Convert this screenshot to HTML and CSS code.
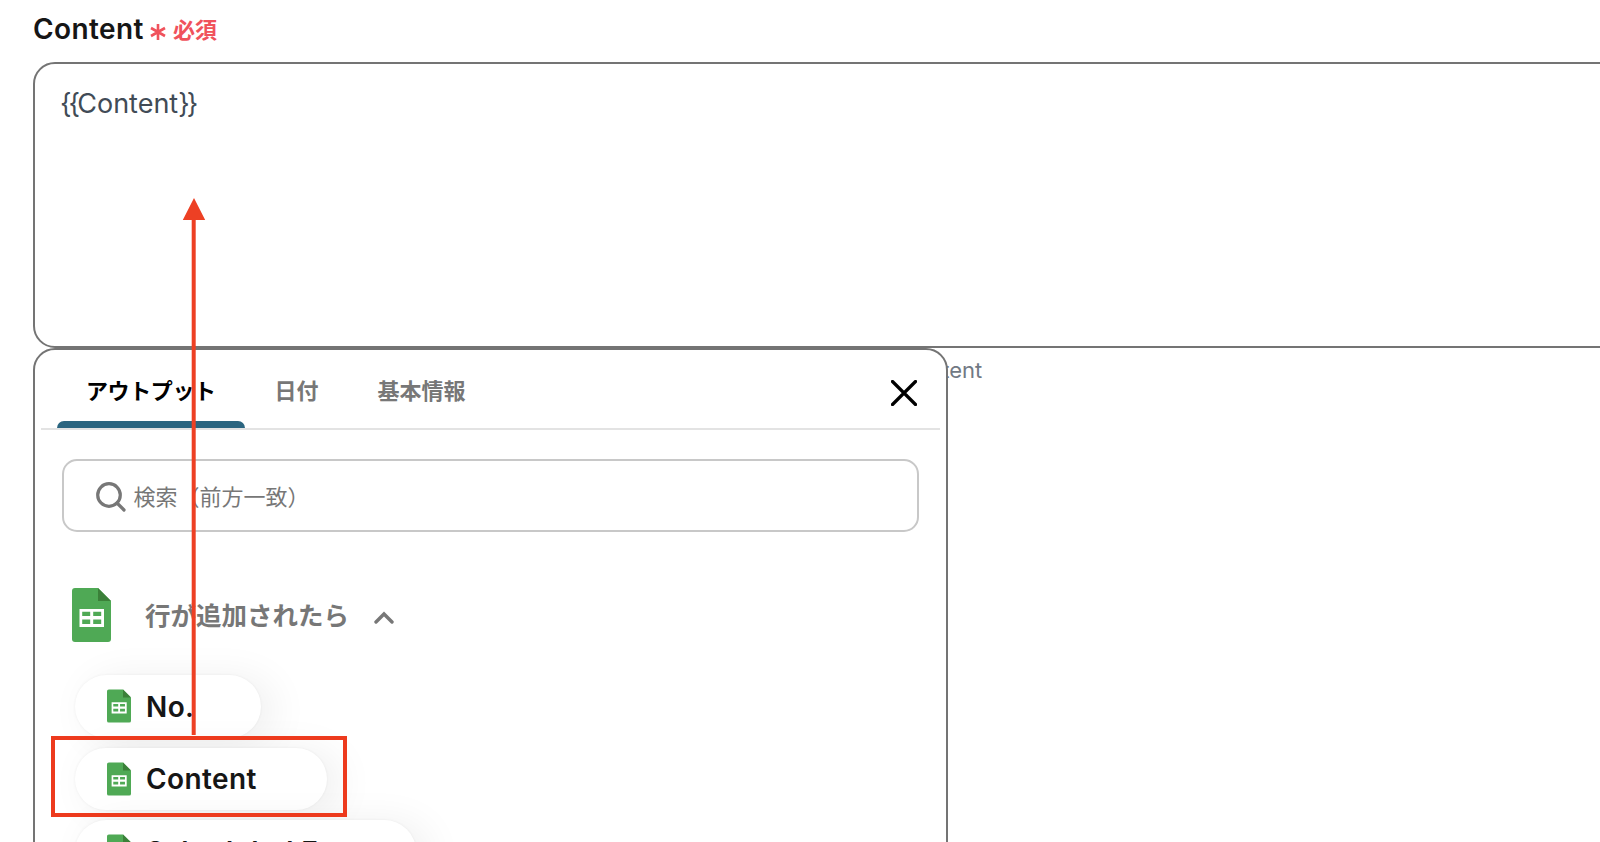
FILE: index.html
```
<!DOCTYPE html>
<html lang="ja">
<head>
<meta charset="UTF-8">
<meta name="viewport" content="width=device-width, initial-scale=1.0">
<title>Content</title>
<link rel="stylesheet" href="styles.css">
</head>
<body>

<!-- Sheet icon shared by the heading and the items -->
<svg class="defs" width="0" height="0">
    <symbol id="sheet" viewBox="0 0 39 54">
        <path d="M3 0h23l13 13v38a3 3 0 0 1-3 3H3a3 3 0 0 1-3-3V3a3 3 0 0 1 3-3z" fill="#4fa955"/>
        <path d="M26 0l13 13H26z" fill="#3b8039"/>
        <path d="M7.5 21h24.500v18H7.500zM10.200 23.800v4.200h8v-4.200zM21.200 23.800v4.200h8v-4.200zM10.200 31.500v4.500h8v-4.500zM21.200 31.500v4.500h8v-4.500z" fill="#fff" fill-rule="evenodd"/>
    </symbol>
</svg>

<div class="field">
    <div class="label">
        <span class="name">Content</span>
        <svg class="asterisk" width="16" height="18" viewBox="0 0 16 18"><path d="M8 1v16M1 5l14 8M15 5L1 13" stroke="#f0525c" stroke-width="2.600" fill="none"/></svg>
        <span class="required">必須</span>
    </div>
    <div class="textarea"><span class="brace">{{</span>Content<span class="brace">}}</span></div>
    <div class="below">
        <div class="panel">
            <div class="tabs">
                <div class="tab active"><span>アウトプット</span></div>
                <div class="tab">日付</div>
                <div class="tab">基本情報</div>
                <svg class="close" width="26" height="26" viewBox="0 0 26 26"><path d="M1.500 1.500l23 23M24.500 1.500l-23 23" stroke="#000" stroke-width="3.200" stroke-linecap="round"/></svg>
            </div>
            <div class="search">
                <svg width="30" height="30" viewBox="0 0 30 30"><circle cx="13" cy="13" r="11.300" fill="none" stroke="#777" stroke-width="3.200"/><path d="M21 21l7 7" stroke="#777" stroke-width="3.200" stroke-linecap="round"/></svg>
                <span>検索（前方一致）</span>
            </div>
            <div class="group">
                <svg width="39" height="54"><use href="#sheet"/></svg>
                <span class="group-name">行が追加されたら</span>
                <svg class="chevron" width="20" height="13" viewBox="0 0 20 13"><path d="M2 11l8-8 8 8" fill="none" stroke="#777" stroke-width="3.400" stroke-linecap="round"/></svg>
            </div>
            <div class="items">
                <div class="pill short"><svg width="24" height="34"><use href="#sheet"/></svg><span>No.</span></div>
                <div class="pill medium"><svg width="24" height="34"><use href="#sheet"/></svg><span>Content</span></div>
                <div class="pill long"><svg width="24" height="34"><use href="#sheet"/></svg><span>Scheduled For</span></div>
            </div>
        </div>
        <span class="hint">Content</span>
    </div>
</div>

<!-- Annotation -->
<svg class="arrow" width="24" height="538" viewBox="0 0 24 538"><path d="M12 0l11.200 22H13.700v515h-4V22H.8z" fill="#ed4024"/></svg>
<div class="highlight"></div>

</body>
</html>
```
FILE: styles.css
```
* {
    box-sizing: border-box;
}
body {
    margin: 0;
    width: 1600px;
    height: 842px;
    overflow: hidden;
    position: relative;
    background: #fff;
    color: #161616;
    font-family: Inter, "Noto Sans CJK JP", sans-serif;
}
svg {
    display: block;
    flex-shrink: 0;
}
.defs {
    position: absolute;
}
.field {
    padding-left: 33px;
}
.label {
    height: 62px;
    display: flex;
    align-items: center;
    padding-bottom: 4px;
    white-space: nowrap;
}
.name {
    width: 117px;
    font-size: 28px;
    font-weight: 600;
    letter-spacing: 0.400px;
}
.asterisk {
    margin-top: 6px;
}
.required {
    margin-left: 7px;
    margin-bottom: 2px;
    font-size: 22px;
    font-weight: 700;
    color: #f0525c;
}
.textarea {
    height: 286px;
    width: 1600px;
    padding: 22px 25px;
    border: 2px solid #747474;
    border-radius: 22px;
    font-size: 27px;
    line-height: 36px;
    color: #414b56;
}
.brace {
    letter-spacing: -2.900px;
}
.below {
    display: flex;
}
.panel {
    position: relative;
    z-index: 1;
    width: 915px;
    height: 530px;
    padding: 0 6px;
    border: 2px solid #747474;
    border-radius: 22px;
    background: #fff;
}
.tabs {
    display: flex;
    height: 80px;
    padding-left: 16px;
    border-bottom: 2px solid #e3e3e3;
    font-size: 22px;
    font-weight: 700;
    color: #777;
    white-space: nowrap;
}
.tab {
    padding: 25px 29.500px 0;
    line-height: 32px;
}
.tab.active {
    position: relative;
    width: 188px;
    padding-left: 29px;
    color: #000;
    letter-spacing: -0.400px;
}
.tab.active::after {
    content: "";
    position: absolute;
    left: 0;
    bottom: 0;
    width: 100%;
    height: 7px;
    border-radius: 7px 7px 0 0;
    background: #2b6580;
}
.close {
    margin: 30px 23px 0 auto;
}
.search {
    display: flex;
    align-items: center;
    gap: 8px;
    height: 73px;
    margin: 29px 21px 0;
    padding-left: 31.500px;
    border: 2px solid #c8c8c8;
    border-radius: 15px;
    font-size: 22px;
    color: #777;
}
.search svg {
    margin-top: 2px;
}
.search span {
    margin-bottom: 1px;
}
.group {
    display: flex;
    align-items: center;
    height: 54px;
    margin: 56px 0 0 31px;
}
.group-name {
    margin-left: 34px;
    margin-bottom: 4px;
    width: 204px;
    font-size: 25.500px;
    font-weight: 700;
    color: #777;
    white-space: nowrap;
}
.chevron {
    margin-left: 25px;
    margin-top: 4px;
}
.items {
    display: flex;
    flex-direction: column;
    align-items: flex-start;
    gap: 10px;
    margin: 33px 0 0 34px;
}
.pill {
    display: flex;
    align-items: center;
    gap: 15px;
    height: 62.500px;
    padding-left: 32px;
    border-radius: 32px;
    background: #fff;
    box-shadow: 12px 4px 40px rgba(0, 0, 0, 0.070), 0 0 3px rgba(0, 0, 0, 0.060);
    font-size: 28px;
    font-weight: 600;
    letter-spacing: 0.400px;
    white-space: nowrap;
}
.pill span {
    margin-top: 1px;
}
.short {
    width: 186px;
}
.medium {
    width: 252px;
}
.long {
    width: 341px;
}
.hint {
    margin-left: -48px;
    padding-top: 7px;
    font-size: 22px;
    line-height: 30px;
    color: #717984;
}
.arrow {
    position: absolute;
    left: 182px;
    top: 198px;
    z-index: 2;
}
.highlight {
    position: absolute;
    z-index: 2;
    left: 51px;
    top: 736px;
    width: 296px;
    height: 81px;
    border: 4px solid #ed3a1d;
}
```
